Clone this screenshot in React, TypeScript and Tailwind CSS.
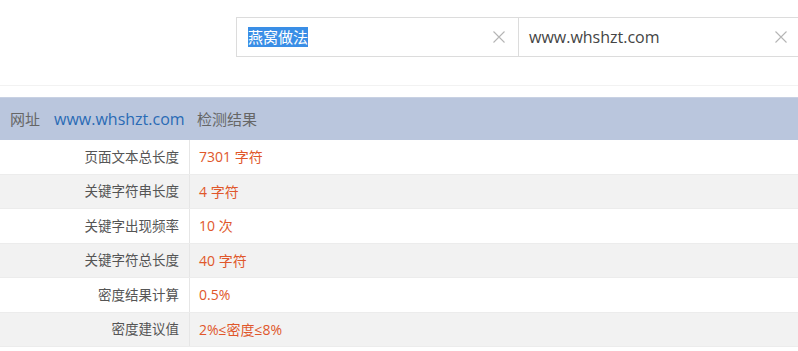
const rows = [
  { label: "页面文本总长度", value: "7301 字符" },
  { label: "关键字符串长度", value: "4 字符" },
  { label: "关键字出现频率", value: "10 次" },
  { label: "关键字符总长度", value: "40 字符" },
  { label: "密度结果计算", value: "0.5%" },
  { label: "密度建议值", value: "2%≤密度≤8%" },
];

function ClearIcon() {
  return (
    <svg width="14" height="14" viewBox="0 0 14 14" className="shrink-0 text-[#b5b5b5]">
      <path d="M1.5 1.5 L12.5 12.5 M12.5 1.5 L1.5 12.5" stroke="currentColor" strokeWidth="1.1" fill="none" />
    </svg>
  );
}

export default function App() {
  return (
    <div
      className="h-[351px] w-[798px] overflow-hidden bg-white text-[#555]"
      style={{ fontFamily: '"Open Sans", "Noto Sans CJK SC", sans-serif' }}
    >
      <div className="flex h-[86px] border-b border-[#f2f2f2] pt-[17px] pl-[236px]">
        <div className="flex h-[40px] w-[282px] shrink-0 items-center border border-r-0 border-[#dcdcdc] pl-[11px] pr-[12px]">
          <span className="bg-[#3a8ee6] text-[15px] leading-[20px] text-white">燕窝做法</span>
          <div className="flex-1" />
          <ClearIcon />
        </div>
        <div className="flex h-[40px] flex-1 items-center border border-r-0 border-[#dcdcdc] pl-[10px] pr-[10px]">
          <span className="text-[16px] text-[#444]">www.whshzt.com</span>
          <div className="flex-1" />
          <ClearIcon />
        </div>
      </div>
      <div className="mt-[11px]">
        <div className="flex h-[43px] items-center border-t border-[#c8d1e3] bg-[#bac6dd] text-[16px]">
          <div className="flex w-[190px] shrink-0 items-center pl-[10px]">
            <span className="text-[15px] text-[#666]">网址</span>
            <span className="ml-[14px] text-[#2a6bb5]">www.whshzt.com</span>
          </div>
          <div className="pl-[7px] text-[15px] text-[#666]">检测结果</div>
        </div>
        {rows.map((r, i) => (
          <div
            key={r.label}
            className={`flex h-[34.5px] items-center border-b border-[#ececec] ${i % 2 === 1 ? "bg-[#f2f2f2]" : "bg-white"}`}
          >
            <div className="flex h-full w-[190px] shrink-0 items-center justify-end border-r border-[#e6e6e6] pr-[10px] text-[13.5px] text-[#555]">
              {r.label}
            </div>
            <div className="pl-[9px] text-[14px] text-[#e0572b]">{r.value}</div>
          </div>
        ))}
      </div>
    </div>
  );
}
